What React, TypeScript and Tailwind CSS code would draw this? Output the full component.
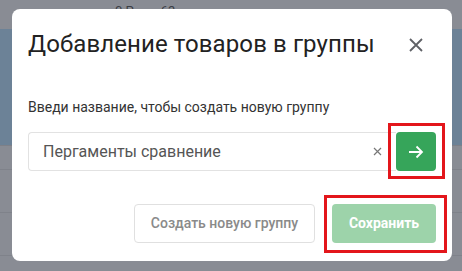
import React from "react";

const font = { fontFamily: "Roboto, 'Noto Sans', sans-serif" };

const Backdrop: React.FC = () => {
    return (
        <div className="flex flex-col w-full h-full bg-[#898c94]">
            <div className="h-[29px] flex items-start text-[13px] text-[#3a3d44] leading-none">
                <span className="ml-[115px] mt-[4px]">0 Р</span>
                <span className="ml-[27px] mt-[4px]">63</span>
            </div>
            <div className="h-[117px] bg-[#6c8297] border-b border-[#7d8088]" />
            <div className="h-[24px] border-b border-[#7f828a]" />
            <div className="h-[43px] border-b border-[#7f828a]" />
            <div className="h-[43px] border-b border-[#7f828a]" />
            <div className="flex-1" />
        </div>
    );
};

const App: React.FC = () => {
    return (
        <div className="relative w-[462px] h-[271px] overflow-hidden" style={font}>
            <Backdrop />

            <div className="absolute left-[12px] top-[9px] w-[440px] h-[252px] bg-white rounded-[8px] px-[16px] pt-[19px] flex flex-col">
                <div className="flex items-center justify-between h-[32px]">
                    <h2 className="text-[24px] leading-[32px] text-[#222] tracking-[0.1px]">
                        Добавление товаров в группы
                    </h2>
                    <svg width="16" height="16" viewBox="0 0 16 16" className="mr-[12px] mt-[2px]">
                        <path d="M2 2 L14 14 M14 2 L2 14" stroke="#5f6166" strokeWidth="1.8" />
                    </svg>
                </div>

                <p className="mt-[37px] text-[14px] leading-[20px] text-[#333]">
                    Введи название, чтобы создать новую группу
                </p>

                <div className="mt-[15px] flex h-[39px]">
                    <div className="flex-1 flex items-center border border-[#e2e2e2] border-r-0 rounded-l-[4px] pl-[14px] pr-[14px]">
                        <span className="flex-1 text-[16px] text-[#555]">Пергаменты сравнение</span>
                        <svg width="9" height="9" viewBox="0 0 9 9">
                            <path d="M1 1 L8 8 M8 1 L1 8" stroke="#777" strokeWidth="1.2" />
                        </svg>
                    </div>
                    <button className="w-[40px] h-[39px] bg-[#36a55a] rounded-[4px] flex items-center justify-center">
                        <svg width="16" height="14" viewBox="0 0 16 14">
                            <path d="M1 7 H14 M8.5 1.5 L14 7 L8.5 12.5" stroke="white" strokeWidth="1.8" fill="none" />
                        </svg>
                    </button>
                </div>

                <div className="mt-[33px] flex justify-end gap-[17px]">
                    <button className="w-[181px] h-[39px] border border-[#e0e0e0] rounded-[4px] text-[14px] font-medium text-[#8a8a8a]">
                        Создать новую группу
                    </button>
                    <button className="w-[104px] h-[39px] bg-[#9dd3aa] rounded-[4px] text-[14px] font-bold text-white">
                        Сохранить
                    </button>
                </div>
            </div>

            <div className="absolute left-[388px] top-[123px] w-[57px] h-[56px] border-[3px] border-[#e3161b]" />
            <div className="absolute left-[324px] top-[195px] w-[123px] h-[58px] border-[3px] border-[#e3161b]" />
        </div>
    );
};

export default App;
